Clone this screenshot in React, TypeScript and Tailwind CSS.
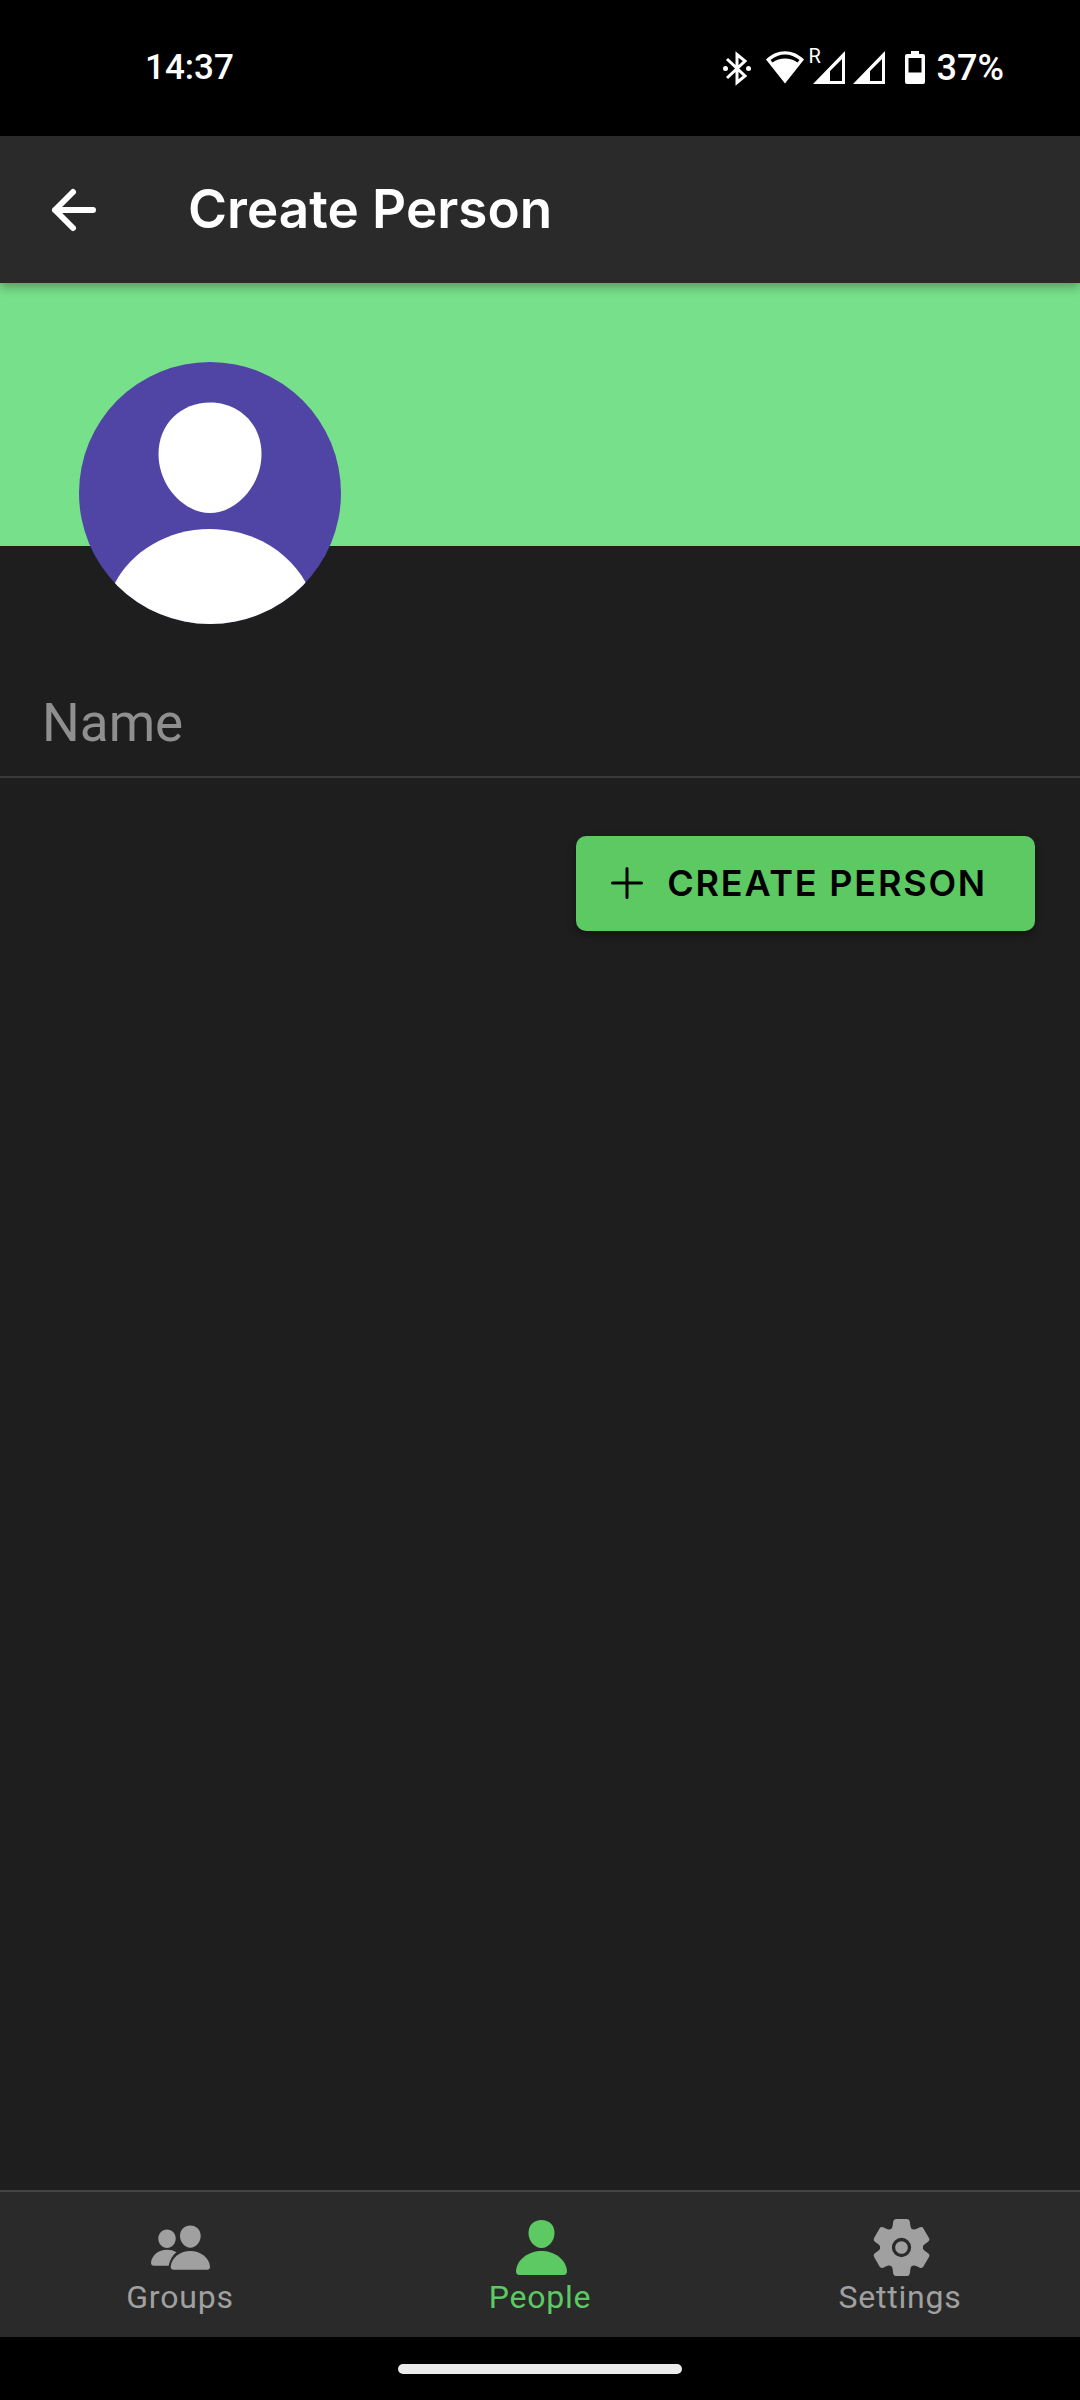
import type { ReactNode } from "react";

function BluetoothIcon() {
  return (
    <svg className="h-9 w-8" viewBox="0 0 32 36" fill="none" stroke="white" strokeWidth="3" aria-hidden="true">
      <path d="M6 9L24 26L16 32.500V4.500L24 11L6 28" strokeLinejoin="miter" />
      <circle cx="4.500" cy="18.500" r="2.500" fill="white" stroke="none" />
      <circle cx="27.500" cy="18.500" r="2.500" fill="white" stroke="none" />
    </svg>
  );
}

function WifiIcon() {
  return (
    <svg className="h-9 w-10" viewBox="0 0 40 36" fill="white" aria-hidden="true">
      <path d="M1 9.500C12 -1.500 28 -1.500 39 9.500L20 33.500ZM5.500 10L7.500 12.500C14.500 7 25.500 7 32.500 12.500L34.500 10C26 2.500 14 2.500 5.500 10Z" fillRule="evenodd" />
    </svg>
  );
}

function SignalIcon() {
  return (
    <svg className="h-9 w-8" viewBox="0 0 32 36" aria-hidden="true">
      <path fillRule="evenodd" d="M32 1V34H0ZM29 9L17 21V31H29Z" fill="white" />
    </svg>
  );
}

function BatteryIcon() {
  return (
    <svg className="h-9 w-5" viewBox="0 0 20 36" aria-hidden="true">
      <path
        fillRule="evenodd"
        d="M6 1H14V4H18Q20 4 20 6V32Q20 34 18 34H2Q0 34 0 32V6Q0 4 2 4H6ZM3.500 8V22.500H16.500V8Z"
        fill="white"
      />
    </svg>
  );
}

function BackIcon() {
  return (
    <svg className="h-12 w-12" viewBox="0 0 48 48" fill="none" stroke="white" strokeWidth="6" strokeLinecap="round" strokeLinejoin="round" aria-hidden="true">
      <path d="M25 6L7 24L25 42M7 24H45" />
    </svg>
  );
}

function PlusIcon() {
  return (
    <svg className="h-8 w-8" viewBox="0 0 32 32" stroke="black" strokeWidth="3" strokeLinecap="round" aria-hidden="true">
      <path d="M16 1.500V30.500M1.500 16H30.500" />
    </svg>
  );
}

function Avatar() {
  return (
    <svg className="size-[262px]" viewBox="0 0 262 262" role="img" aria-label="Person picture">
      <clipPath id="avatar-clip">
        <circle cx="131" cy="131" r="131" />
      </clipPath>
      <g clipPath="url(#avatar-clip)">
        <rect width="262" height="262" fill="#5045a4" />
        <path d="M131 40.500C160 40.500 182.500 62 182.500 92C182.500 124 157 151 131 151S79.500 124 79.500 92C79.500 62 102 40.500 131 40.500Z" fill="white" />
        <path d="M36 221C52 190 88 167 131 167S210 190 227 221V262H36Z" fill="white" />
      </g>
    </svg>
  );
}

function GroupsIcon() {
  return (
    <svg className="size-15" viewBox="0 0 60 60" fill="currentColor" aria-hidden="true">
      <path d="M17 12.500C22 12.500 25.700 16.500 25.700 21.500C25.700 27 21.500 31 17 31S8.300 27 8.300 21.500C8.300 16.500 12 12.500 17 12.500Z" />
      <path d="M40.300 8.500C46.300 8.500 50.700 13 50.700 19C50.700 25.500 45.500 30.700 40.300 30.700S30 25.500 30 19C30 13 34.300 8.500 40.300 8.500Z" />
      <path d="M17 32.700C20.500 32.700 24 33.500 26.500 35.200C22.500 38 19.800 43.500 18.700 48.700H4Q1 48.700 1 45.500C2 38 8.500 32.700 17 32.700Z" />
      <path d="M40.300 34C50 34 59 40 60 49.500Q60 52.700 57 52.700H23.700Q20.700 52.700 20.700 49.500C21.700 40 30.700 34 40.300 34Z" />
    </svg>
  );
}

function PersonIcon() {
  return (
    <svg className="size-15" viewBox="0 0 60 60" fill="currentColor" aria-hidden="true">
      <path d="M31.500 3C39 3 44.500 8 44.500 16C44.500 24 38.500 31 31.500 31S18.500 24 18.500 16C18.500 8 24 3 31.500 3Z" />
      <path d="M31.500 34C44 34 56 42 57 54Q57 58 53.500 58H9.500Q6 58 6 54C7 42 19 34 31.500 34Z" />
    </svg>
  );
}

function SettingsIcon() {
  const tooth = "M-11 -17Q-9.200 -19 -8.800 -22L-8.300 -26Q-8 -28.500 -5.500 -28.500H5.500Q8 -28.500 8.300 -26L8.800 -22Q9.200 -19 11 -17Z";
  return (
    <svg className="size-15" viewBox="0 0 60 60" fill="currentColor" aria-hidden="true">
      <g transform="translate(31.500 30.500)">
        <circle r="21.500" />
        {[0, 60, 120, 180, 240, 300].map((angle) => (
          <path key={angle} d={tooth} transform={`rotate(${angle})`} />
        ))}
        <circle r="8" fill="none" stroke="#2a2a2a" strokeWidth="3.300" />
      </g>
    </svg>
  );
}

function Tab({ label, active, children }: { label: string; active?: boolean; children: ReactNode }) {
  return (
    <a
      href="#"
      aria-current={active ? "page" : undefined}
      className={`flex flex-1 flex-col items-center pt-[25px] text-[32px] leading-9 tracking-wide ${active ? "text-[#5dc963]" : "text-[#a0a0a0]"}`}
    >
      {children}
      <span className="mt-0.5">{label}</span>
    </a>
  );
}

export default function App() {
  return (
    <div className="flex min-h-screen flex-col bg-[#1e1e1e] font-['Roboto',sans-serif] text-white">
      <div className="flex h-34 items-center justify-between bg-black pr-[76px] pl-[145px] text-[36px] font-medium">
        <time className="text-[35px]">14:37</time>
        <div className="flex items-center">
          <BluetoothIcon />
          <div className="ml-3">
            <WifiIcon />
          </div>
          <div className="relative ml-2">
            <SignalIcon />
            <span className="absolute -top-1 -left-1 text-[20px] leading-5 font-normal">R</span>
          </div>
          <div className="ml-2">
            <SignalIcon />
          </div>
          <div className="mr-3 ml-5">
            <BatteryIcon />
          </div>
          <span>37%</span>
        </div>
      </div>

      <header className="relative flex h-[147px] items-center bg-[#2a2a2a] pl-12 shadow-[0_4px_10px_rgba(0,0,0,0.3)]">
        <button type="button" aria-label="Back">
          <BackIcon />
        </button>
        <h1 className="ml-23 font-['Inter',sans-serif] text-[53px] font-semibold">Create Person</h1>
      </header>

      <main className="flex-1">
        <div className="h-[263px] bg-[#76e08b] pt-[79px] pl-[79px]">
          <Avatar />
        </div>
        <form className="pt-[130px]" onSubmit={(event) => event.preventDefault()}>
          <input
            type="text"
            aria-label="Name"
            placeholder="Name"
            className="block h-[102px] w-full border-b-2 border-[#3a3a3a] bg-transparent px-[42px] pb-1.5 text-[53px] outline-none placeholder:text-[#8f8f8f]"
          />
          <div className="flex justify-end px-[45px] pt-[58px]">
            <button
              type="submit"
              className="flex h-[95px] items-center gap-6 rounded-[10px] bg-[#5dc963] pr-12 pb-0.5 pl-[35px] font-['Inter',sans-serif] text-[36px] font-semibold tracking-wider text-black uppercase shadow-[0_4px_8px_rgba(0,0,0,0.35)]"
            >
              <PlusIcon />
              Create Person
            </button>
          </div>
        </form>
      </main>

      <nav className="flex h-[147px] border-t-2 border-[#444444] bg-[#2a2a2a]">
        <Tab label="Groups">
          <GroupsIcon />
        </Tab>
        <Tab label="People" active>
          <PersonIcon />
        </Tab>
        <Tab label="Settings">
          <SettingsIcon />
        </Tab>
      </nav>

      <div className="flex h-[63px] items-center justify-center bg-black">
        <div className="h-2.5 w-[284px] rounded-full bg-[#ebebeb]" />
      </div>
    </div>
  );
}
